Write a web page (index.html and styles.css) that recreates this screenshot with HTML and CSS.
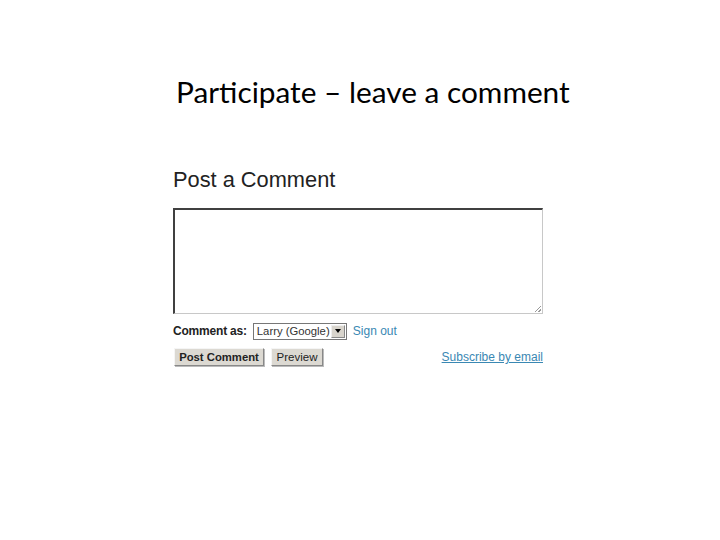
FILE: index.html
```html
<!DOCTYPE html>
<html>
<head>
<meta charset="utf-8">
<link rel="stylesheet" href="styles.css">
</head>
<body>
<div class="slide">
  <h1 class="title">Participate – leave a comment</h1>
  <div class="form">
    <h2 class="heading">Post a Comment</h2>
    <div class="textarea"><span class="grip"></span></div>
    <div class="row as-row">
      <span class="label">Comment as:</span>
      <span class="select"><span class="sel-text">Larry (Google)</span><span class="sel-btn"><span class="arrow"></span></span></span>
      <a class="link">Sign out</a>
    </div>
    <div class="row btn-row">
      <span class="btn bold">Post Comment</span>
      <span class="btn preview">Preview</span>
      <span class="spacer"></span>
      <a class="link under">Subscribe by email</a>
    </div>
  </div>
</div>
</body>
</html>
```
FILE: styles.css
```css
html, body { margin: 0; padding: 0; background: #fff; }
.slide { width: 720px; height: 540px; position: relative; }
.title {
  margin: 0;
  padding: 74px 0 0 176px;
  font-family: Lato, "Open Sans", sans-serif;
  font-weight: normal;
  font-size: 29.8px;
  line-height: 36px;
  color: #000;
  white-space: nowrap;
}
.form { margin: 57px 0 0 173px; width: 370px; font-family: "Liberation Sans", Arial, sans-serif; white-space: nowrap; }
.heading { margin: 0; font-weight: normal; font-size: 21.8px; line-height: 26px; color: #222; }
.textarea {
  margin-top: 15px;
  height: 103px;
  border-top: 2px solid #404040;
  border-left: 2px solid #404040;
  border-right: 1px solid #c8c8c8;
  border-bottom: 1px solid #c8c8c8;
  position: relative;
}
.grip {
  position: absolute; right: 1px; bottom: 1px; width: 6px; height: 6px;
  background: linear-gradient(135deg, transparent 45%, #999 45%, #999 55%, transparent 55%, transparent 75%, #999 75%, #999 85%, transparent 85%);
}
.row { display: flex; align-items: center; font-size: 12px; }
.as-row { margin-top: 8px; height: 18px; }
.label { font-weight: bold; color: #222; letter-spacing: -0.2px; }
.select {
  margin-left: 6px;
  display: flex; align-items: center;
  height: 15px; width: 92px;
  border: 1px solid #777;
  background: #fff;
}
.sel-text { flex: 1; padding-left: 3px; color: #333; font-size: 11.3px; line-height: 15px; overflow: hidden; }
.sel-btn {
  width: 14px; height: 13px; margin-right: 1px;
  background: #d8d4cc; border: 1px solid #888; border-top-color: #eee; border-left-color: #eee; box-sizing: border-box;
  display: flex; align-items: center; justify-content: center;
}
.arrow { width: 0; height: 0; border-left: 3.5px solid transparent; border-right: 3.5px solid transparent; border-top: 4px solid #000; }
.link { color: #3a88b3; margin-left: 6px; }
.under { text-decoration: underline; }
.btn-row { margin-top: 7px; height: 20px; }
.btn {
  display: inline-flex; align-items: center; justify-content: center;
  height: 16px; padding: 0;
  background: #dcd9d2;
  border: 1px solid #f5f5f5; border-right-color: #888; border-bottom-color: #888;
  box-shadow: 1px 1px 0 #bbb;
  color: #222; font-size: 11.5px; margin-left: 1px; margin-right: 6px;
}
.btn.bold { font-weight: bold; width: 88px; font-size: 11.3px; }
.btn.preview { width: 50px; }
.spacer { flex: 1; }
```
